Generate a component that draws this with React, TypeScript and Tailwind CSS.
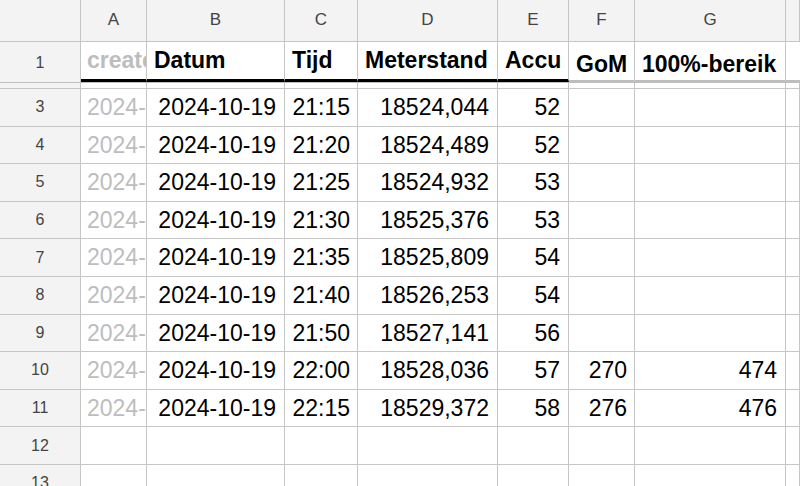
const GRID = 'grid grid-cols-[81px_66px_138px_73px_140px_71px_66px_151px_1fr]';
const LINE = 'border-r border-b border-[#c6c6c6]';

const ROWS: [number, string, string, string, string, string][] = [
  [3, '21:15', '18524,044', '52', '', ''],
  [4, '21:20', '18524,489', '52', '', ''],
  [5, '21:25', '18524,932', '53', '', ''],
  [6, '21:30', '18525,376', '53', '', ''],
  [7, '21:35', '18525,809', '54', '', ''],
  [8, '21:40', '18526,253', '54', '', ''],
  [9, '21:50', '18527,141', '56', '', ''],
  [10, '22:00', '18528,036', '57', '270', '474'],
  [11, '22:15', '18529,372', '58', '276', '476'],
];

const LETTERS = ['A', 'B', 'C', 'D', 'E', 'F', 'G', ''];

export default function App() {
  return (
    <div className="w-[800px] h-[486px] overflow-hidden bg-white font-['Liberation_Sans',Arial,sans-serif] text-black">
      {/* column letters */}
      <div className={`${GRID} h-[42px] bg-[#f3f3f3] text-[17px] text-[#444]`}>
        <div className={LINE} />
        {LETTERS.map((l, i) => (
          <div key={i} className={`${LINE} flex items-center justify-center pb-[2px]`}>
            {l}
          </div>
        ))}
      </div>

      {/* frozen header row */}
      <div className={`${GRID} h-[38px] text-[23px] font-bold`}>
        <div className="border-r border-[#c6c6c6] bg-[#f3f3f3] flex items-center justify-center text-[16px] font-normal text-[#444] pt-[2px]">
          1
        </div>
        <div className="border-r border-[#c6c6c6] border-b-[3px] border-b-black flex items-center pl-[6px] overflow-hidden whitespace-nowrap text-[#bdbdbd]">
          create
        </div>
        {['Datum', 'Tijd', 'Meterstand', 'Accu'].map((h) => (
          <div key={h} className="border-r border-[#c6c6c6] border-b-[3px] border-b-black flex items-center pl-[7px] whitespace-nowrap">
            {h}
          </div>
        ))}
        <div className="border-r border-[#c6c6c6] flex items-center pl-[7px] pt-[5px] whitespace-nowrap">GoM</div>
        <div className="border-r border-[#c6c6c6] flex items-center pl-[7px] pt-[5px] whitespace-nowrap">100%-bereik</div>
        <div />
      </div>

      {/* freeze bar */}
      <div className="h-[3px] bg-[#bdbdbd]" />

      {/* partially scrolled row 2 */}
      <div className={`${GRID} h-[6px]`}>
        <div className={`${LINE} bg-[#f3f3f3]`} />
        {LETTERS.map((_, i) => (
          <div key={i} className={LINE} />
        ))}
      </div>

      {ROWS.map(([n, t, m, a, f, g]) => (
        <div key={n} className={`${GRID} h-[37.6px] text-[23px]`}>
          <div className={`${LINE} bg-[#f3f3f3] flex items-center justify-center text-[16px] text-[#444]`}>{n}</div>
          <div className={`${LINE} flex items-center pl-[6px] overflow-hidden whitespace-nowrap text-[#bdbdbd]`}>
            2024-
          </div>
          <div className={`${LINE} flex items-center justify-end pr-[8px]`}>2024-10-19</div>
          <div className={`${LINE} flex items-center justify-end pr-[7px]`}>{t}</div>
          <div className={`${LINE} flex items-center justify-end pr-[8px]`}>{m}</div>
          <div className={`${LINE} flex items-center justify-end pr-[8px]`}>{a}</div>
          <div className={`${LINE} flex items-center justify-end pr-[7px]`}>{f}</div>
          <div className={`${LINE} flex items-center justify-end pr-[8px]`}>{g}</div>
          <div className={LINE} />
        </div>
      ))}

      {[12, 13].map((n) => (
        <div key={n} className={`${GRID} h-[37.6px]`}>
          <div className={`${LINE} bg-[#f3f3f3] flex items-center justify-center text-[16px] text-[#444]`}>{n}</div>
          {LETTERS.map((_, i) => (
            <div key={i} className={LINE} />
          ))}
        </div>
      ))}
    </div>
  );
}
